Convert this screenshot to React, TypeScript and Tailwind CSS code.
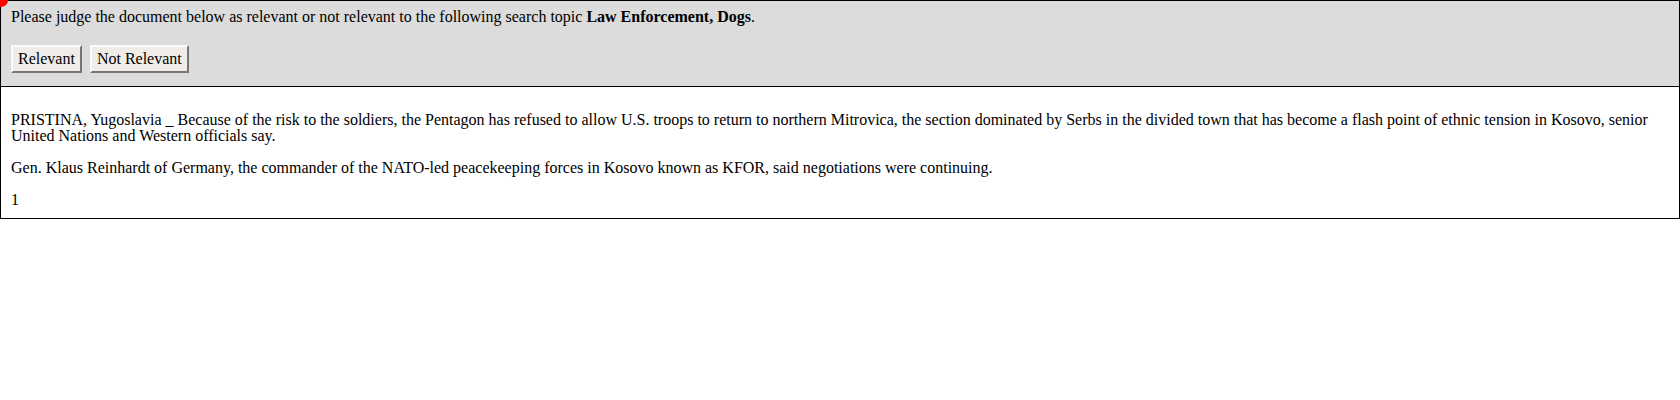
import React from "react";

export default function App() {
  return (
    <div className="relative w-[1680px] bg-white text-black text-[16px] leading-[16px]" style={{ fontFamily: '"Liberation Serif", "Times New Roman", serif' }}>
      <div className="absolute left-[-6px] top-[-7px] w-[14px] h-[14px] rounded-full bg-[#ff0000] z-10" />
      <div className="border border-black bg-[#dcdcdc] pl-[10px] pt-[8px] pb-[13px]">
        <div>
          Please judge the document below as relevant or not relevant to the following search topic <b>Law Enforcement, Dogs</b>.
        </div>
        <div className="mt-[20px] flex gap-[8px]">
          <button className="h-[28px] px-[5px] bg-[#f0ede8] border-2 border-t-[#fafafa] border-l-[#fafafa] border-r-[#777] border-b-[#777] leading-[18px]">Relevant</button>
          <button className="h-[28px] px-[5px] bg-[#f0ede8] border-2 border-t-[#fafafa] border-l-[#fafafa] border-r-[#777] border-b-[#777] leading-[18px]">Not Relevant</button>
        </div>
      </div>
      <div className="border border-t-0 border-black px-[10px] pt-[9px] pb-[10px]">
        <p className="mt-[16px]">
          PRISTINA, Yugoslavia _ Because of the risk to the soldiers, the Pentagon has refused to allow U.S. troops to return to northern Mitrovica, the section dominated by Serbs in the divided town that has become a flash point of ethnic tension in Kosovo, senior United Nations and Western officials say.
        </p>
        <p className="mt-[16px]">
          Gen. Klaus Reinhardt of Germany, the commander of the NATO-led peacekeeping forces in Kosovo known as KFOR, said negotiations were continuing.
        </p>
        <p className="mt-[16px]">1</p>
      </div>
    </div>
  );
}
